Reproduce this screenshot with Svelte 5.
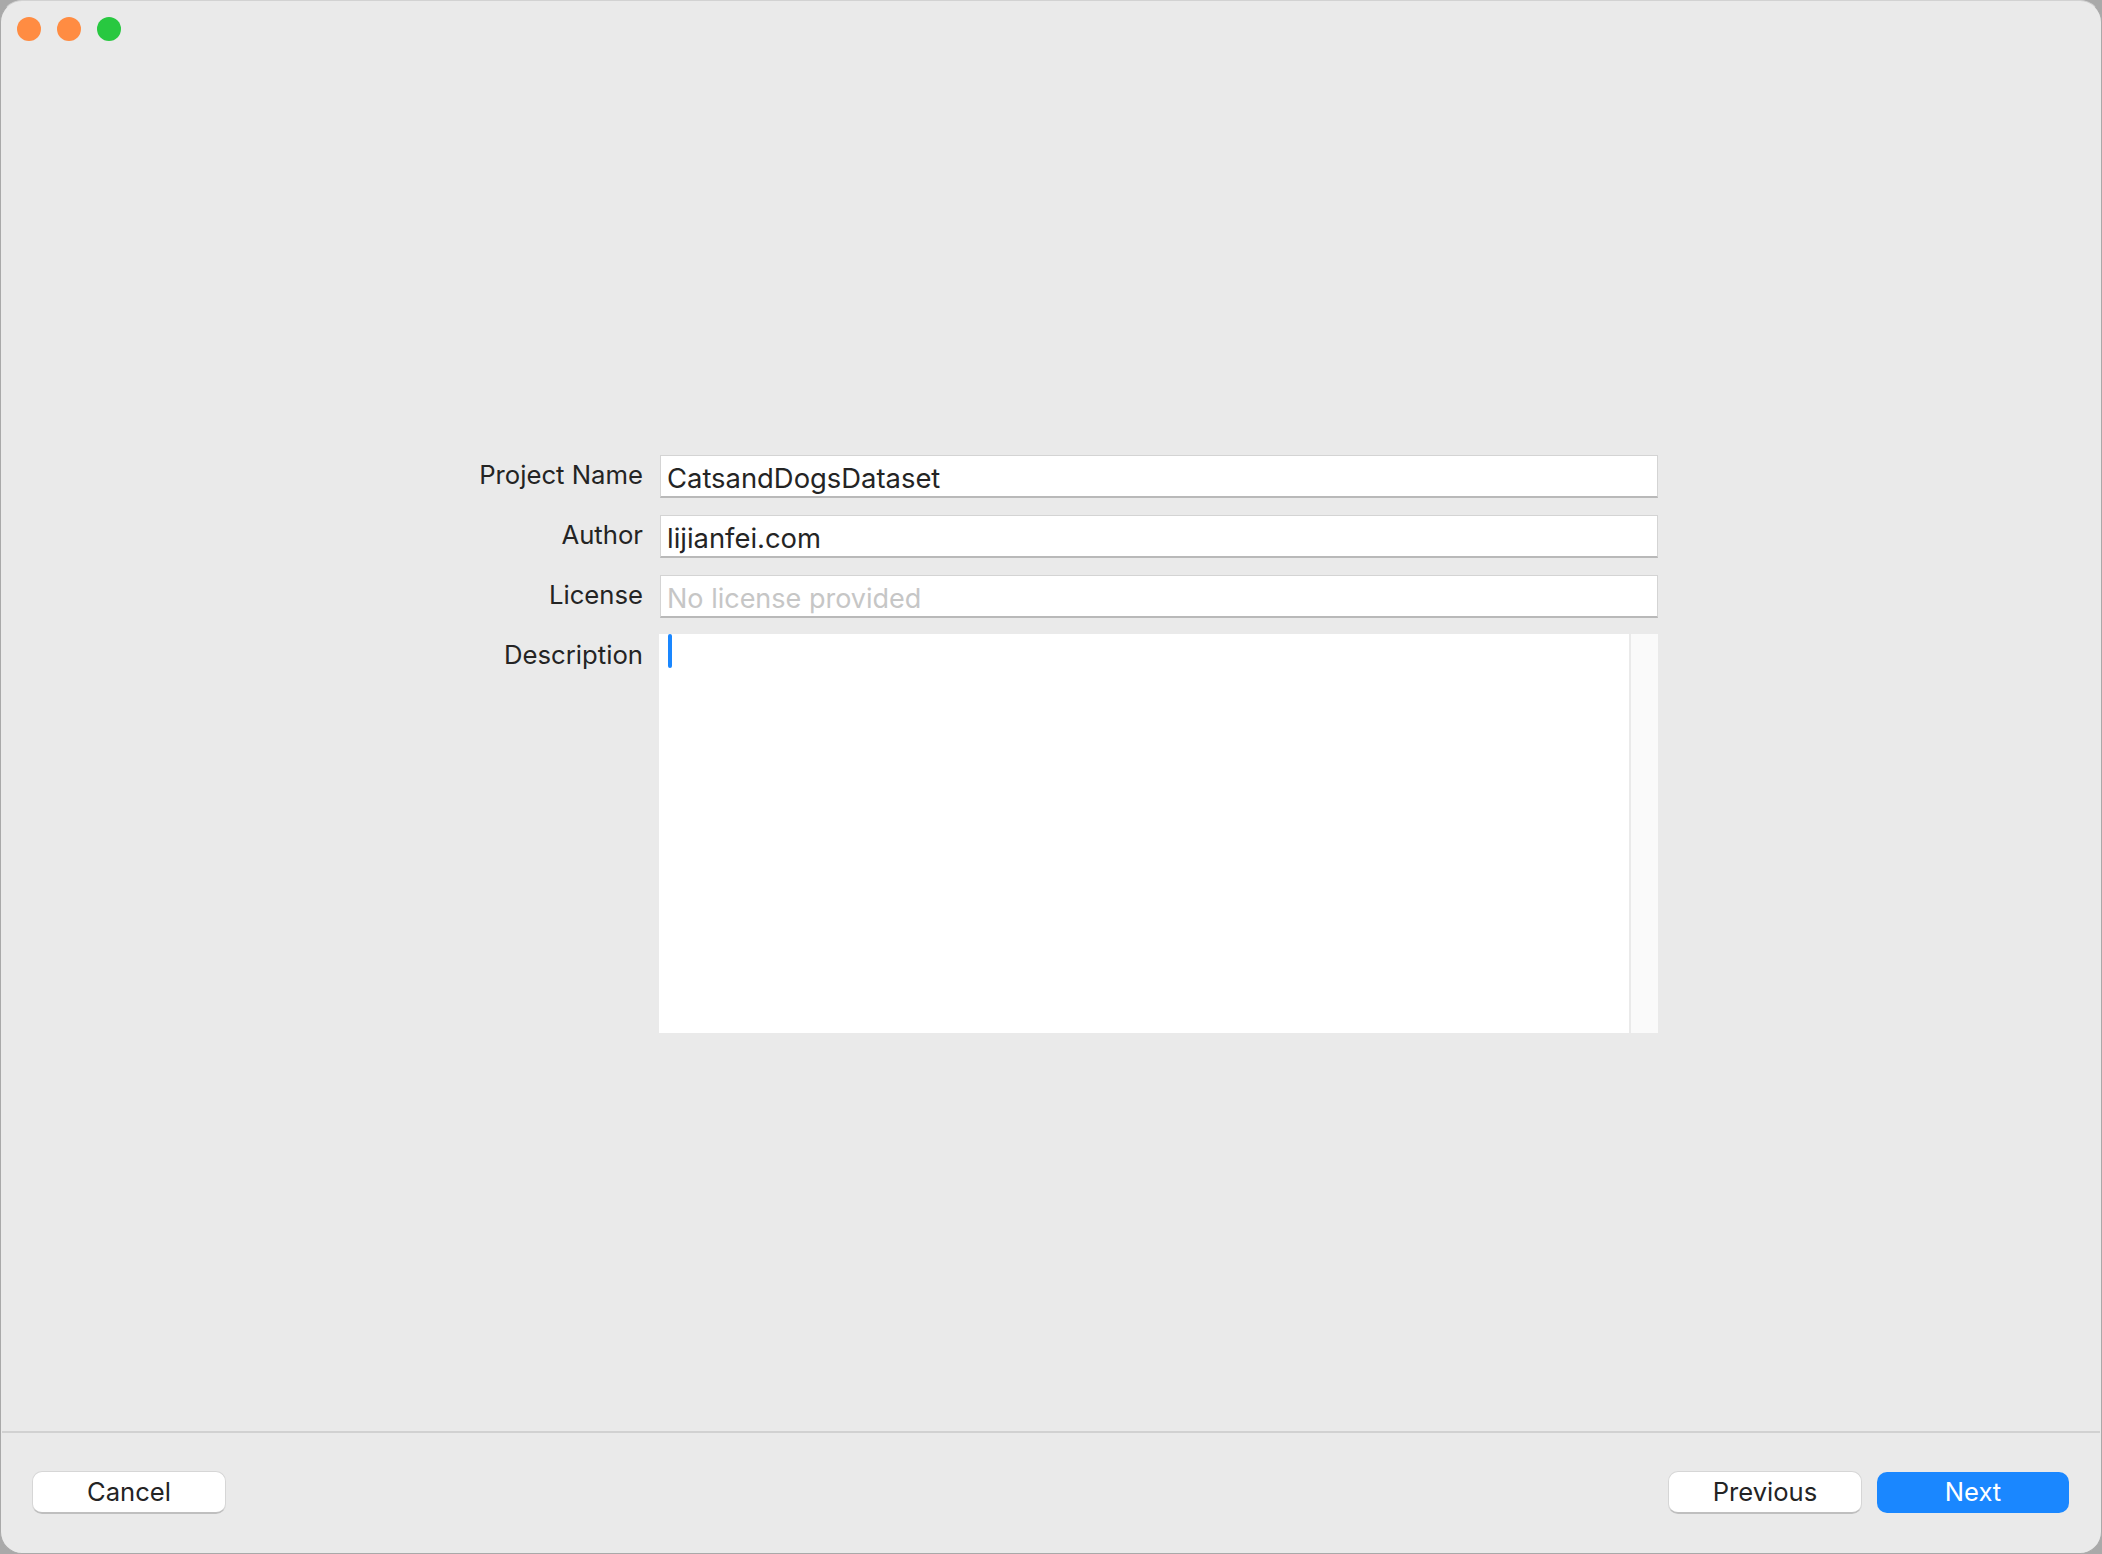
<script>
  const lights = ['#ff8c42', '#ff8c42', '#28c840'];

  const fields = [
    { label: 'Project Name', value: 'CatsandDogsDataset', placeholder: '' },
    { label: 'Author', value: 'lijianfei.com', placeholder: '' },
    { label: 'License', value: '', placeholder: 'No license provided' }
  ];
</script>

<div class="window">
  <div class="titlebar">
    {#each lights as color}
      <span class="light" style="background: {color}"></span>
    {/each}
  </div>

  <main class="content">
    <div class="form">
      {#each fields as field}
        <span class="label">{field.label}</span>
        <div class="field" class:empty={!field.value}>{field.value || field.placeholder}</div>
      {/each}

      <span class="label description">Description</span>
      <div class="editor">
        <div class="text"><span class="caret"></span></div>
        <div class="gutter"></div>
      </div>
    </div>
  </main>

  <footer class="footer">
    <button class="btn">Cancel</button>
    <div class="right">
      <button class="btn">Previous</button>
      <button class="btn primary">Next</button>
    </div>
  </footer>
</div>

<style>
  :global(body) {
    background: #a9a9a9;
  }

  .window {
    box-sizing: border-box;
    width: 2102px;
    height: 1554px;
    padding: 1px;
    border-radius: 22px;
    border: 1px solid #a9a9a9;
    border-top-color: #d2d2d2;
    background: #eaeaea;
    display: flex;
    flex-direction: column;
    font-family: Inter, 'Liberation Sans', sans-serif;
    color: #242424;
  }

  .titlebar {
    display: flex;
    gap: 16px;
    padding: 15px 15px 0;
    height: 39px;
    box-sizing: border-box;
    flex: none;
  }

  .light {
    width: 24px;
    height: 24px;
    border-radius: 50%;
  }

  .content {
    flex: 1;
    padding-top: 414px;
  }

  .form {
    display: grid;
    grid-template-columns: 641px 999px;
    column-gap: 16px;
    row-gap: 17px;
  }

  .label {
    text-align: right;
    font-size: 25.7px;
    line-height: 40px;
  }

  .field {
    box-sizing: border-box;
    height: 43px;
    margin-left: 1px;
    padding: 3px 6px 0;
    background: #fff;
    border: 1px solid #d4d4d4;
    border-bottom: 2px solid #b9b9b9;
    font-size: 27.4px;
    line-height: 38px;
  }

  .field.empty {
    color: #c6c6c6;
    font-size: 27px;
    line-height: 39px;
  }

  .description {
    margin-top: -1px;
    line-height: 41px;
  }

  .editor {
    display: flex;
    height: 399px;
    margin-top: -1px;
    background: #fff;
  }

  .text {
    flex: 1;
    position: relative;
  }

  .caret {
    position: absolute;
    left: 9px;
    top: 0;
    width: 4px;
    height: 34px;
    border-radius: 2px;
    background: #1a87ff;
  }

  .gutter {
    width: 27px;
    background: #fafafa;
    border-left: 2px solid #eaeaea;
  }

  .footer {
    flex: none;
    height: 121px;
    box-sizing: border-box;
    border-top: 2px solid #d1d1d1;
    padding: 38px 31px 0 30px;
    display: flex;
    justify-content: space-between;
    align-items: flex-start;
  }

  .right {
    display: flex;
    gap: 15px;
  }

  .btn {
    box-sizing: border-box;
    width: 194px;
    height: 43px;
    border: 1px solid #d6d6d6;
    border-bottom: 2px solid #bfbfbf;
    border-radius: 10px;
    background: #fff;
    color: #242424;
    font-family: inherit;
    font-size: 25.6px;
    padding: 0 0 2px;
  }

  .btn.primary {
    width: 192px;
    height: 41px;
    margin-top: 1px;
    border: none;
    background: #1a87ff;
    color: #fff;
  }
</style>
